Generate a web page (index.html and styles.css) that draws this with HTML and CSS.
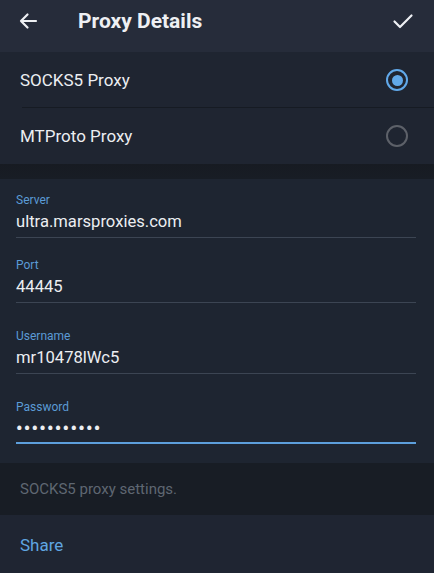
FILE: index.html
```html
<!DOCTYPE html>
<html>
<head>
<meta charset="utf-8">
<link rel="stylesheet" href="styles.css">
</head>
<body>
<div class="screen">
  <header class="topbar">
    <svg class="icon back" width="20" height="20" viewBox="0 0 20 20"><path d="M18 10H3M9.5 3.5L3 10l6.5 6.5" fill="none" stroke="#eef0f3" stroke-width="2.2" stroke-linecap="round" stroke-linejoin="round"/></svg>
    <h1 class="title">Proxy Details</h1>
    <svg class="icon check" width="22" height="20" viewBox="0 0 22 20"><path d="M2.5 10.5l5.5 5.5L19.5 4.5" fill="none" stroke="#eef0f3" stroke-width="2.2" stroke-linecap="round" stroke-linejoin="round"/></svg>
  </header>

  <section class="types">
    <div class="row">
      <span class="row-label">SOCKS5 Proxy</span>
      <span class="radio on"></span>
    </div>
    <div class="row">
      <span class="row-label">MTProto Proxy</span>
      <span class="radio"></span>
    </div>
  </section>

  <div class="gap"></div>

  <section class="form">
    <div class="field f-server">
      <div class="label">Server</div>
      <div class="value">ultra.marsproxies.com</div>
    </div>
    <div class="field f-port">
      <div class="label">Port</div>
      <div class="value">44445</div>
    </div>
    <div class="field f-user">
      <div class="label">Username</div>
      <div class="value">mr10478lWc5</div>
    </div>
    <div class="field f-pass active">
      <div class="label">Password</div>
      <div class="value dots">•••••••••••</div>
    </div>
  </section>

  <div class="info">SOCKS5 proxy settings.</div>

  <section class="share">
    <span class="share-link">Share</span>
  </section>
</div>
</body>
</html>
```

FILE: styles.css
```css
html, body {
  margin: 0;
  padding: 0;
  background: #1e2531;
}
body {
  font-family: Roboto, "Noto Sans", "Liberation Sans", sans-serif;
  color: #eceef1;
}
.screen {
  width: 434px;
  height: 573px;
  overflow: hidden;
  display: flex;
  flex-direction: column;
  background: #1e2531;
}
.topbar {
  height: 52px;
  flex: none;
  background: #262c3a;
  display: flex;
  align-items: flex-start;
  box-sizing: border-box;
  padding: 11px 18px 0 18px;
}
.icon { display: block; }
.title {
  margin: -2px 0 0 40px;
  font-size: 21px;
  font-weight: 700;
  line-height: 24px;
  color: #eef0f3;
  flex: 1;
}
.check { margin-right: 2px; }

.types {
  background: #1f2531;
  flex: none;
}
.row {
  height: 56px;
  display: flex;
  align-items: center;
  justify-content: space-between;
  padding: 0 26px 0 20px;
  position: relative;
}
.row + .row::before {
  content: "";
  position: absolute;
  left: 22px;
  right: 0;
  top: -1px;
  height: 1px;
  background: #161b23;
}
.row-label {
  font-size: 17px;
  color: #eceef1;
}
.radio {
  width: 22px;
  height: 22px;
  border-radius: 50%;
  border: 2px solid #5d6169;
  box-sizing: border-box;
  position: relative;
}
.radio.on {
  border: 2.5px solid #61a9ea;
}
.radio.on::after {
  content: "";
  position: absolute;
  left: 50%;
  top: 50%;
  width: 11px;
  height: 11px;
  margin: -5.5px 0 0 -5.5px;
  border-radius: 50%;
  background: #61a9ea;
}
.gap {
  height: 15px;
  flex: none;
  background: linear-gradient(#171b22, #181d25);
}
.form {
  background: #1e2531;
  padding: 13px 18px 19px 16px;
  flex: none;
  display: flex;
  flex-direction: column;
}
.field {
  border-bottom: 1px solid #3c4553;
  padding-bottom: 3px;
}
.f-port { margin-top: 19px; }
.f-user { margin-top: 25px; }
.f-pass { margin-top: 25px; }
.field.active {
  border-bottom: 2px solid #5d9fdc;
  padding-bottom: 1px;
}
.label {
  font-size: 12px;
  line-height: 16px;
  color: #5b9bd6;
}
.value {
  margin-top: 2px;
  font-size: 16.6px;
  line-height: 24px;
  color: #eceef1;
}
.dots {
  font-size: 18px;
  letter-spacing: 1.3px;
  font-weight: 700;
}
.info {
  height: 52px;
  flex: none;
  background: #181d25;
  display: flex;
  align-items: center;
  padding-left: 20px;
  font-size: 15px;
  color: #5f6772;
}
.share {
  flex: 1;
  background: #1f2532;
  display: flex;
  align-items: flex-start;
  padding: 19px 0 0 20px;
}
.share-link {
  font-size: 17px;
  line-height: 22px;
  color: #5fa6e1;
}
```
